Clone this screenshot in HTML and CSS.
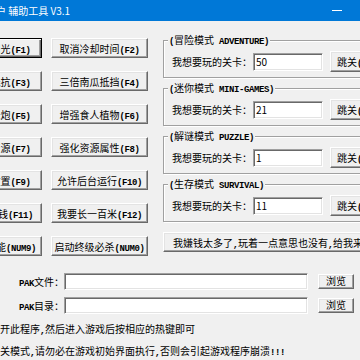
FILE: index.html
```html
<!DOCTYPE html>
<html lang="zh-CN">
<head>
  <meta charset="UTF-8" />
  <meta name="viewport" content="width=device-width, initial-scale=1.0" />
  <title>辅助工具 V3.1</title>
  <link rel="stylesheet" href="styles.css">
</head>
<body>
  <div class="titlebar">
    <span class="title">用户 辅助工具 V3.1</span>
    <span class="min"></span>
  </div>

  <div class="main">
    <div class="hotkeys">
      <button class="btn default">自动收集阳光<span class="en">(F1)</span></button>
      <button class="btn">取消冷却时间<span class="en">(F2)</span></button>
      <button class="btn">植物超强抵抗<span class="en">(F3)</span></button>
      <button class="btn">三倍南瓜抵挡<span class="en">(F4)</span></button>
      <button class="btn">无冷却玉米炮<span class="en">(F5)</span></button>
      <button class="btn">增强食人植物<span class="en">(F6)</span></button>
      <button class="btn">无限阳光资源<span class="en">(F7)</span></button>
      <button class="btn">强化资源属性<span class="en">(F8)</span></button>
      <button class="btn">植物随意放置<span class="en">(F9)</span></button>
      <button class="btn">允许后台运行<span class="en">(F10)</span></button>
      <button class="btn">获得大量金钱<span class="en">(F11)</span></button>
      <button class="btn">我要长一百米<span class="en">(F12)</span></button>
      <button class="btn">开启所有功能<span class="en">(NUM9)</span></button>
      <button class="btn">启动终级必杀<span class="en">(NUM0)</span></button>
    </div>

    <div class="side">
      <div class="group">
        <span class="group-title"><span class="en">(</span>冒险模式<span class="en"> ADVENTURE)</span></span>
        <label class="level-label">我想要玩的关卡：</label>
        <input class="field" type="text" value="50">
        <button class="btn jump">跳关<span class="en">(J1)</span></button>
      </div>
      <div class="group">
        <span class="group-title"><span class="en">(</span>迷你模式<span class="en"> MINI-GAMES)</span></span>
        <label class="level-label">我想要玩的关卡：</label>
        <input class="field" type="text" value="21">
        <button class="btn jump">跳关<span class="en">(J2)</span></button>
      </div>
      <div class="group">
        <span class="group-title"><span class="en">(</span>解谜模式<span class="en"> PUZZLE)</span></span>
        <label class="level-label">我想要玩的关卡：</label>
        <input class="field" type="text" value="1">
        <button class="btn jump">跳关<span class="en">(J3)</span></button>
      </div>
      <div class="group">
        <span class="group-title"><span class="en">(</span>生存模式<span class="en"> SURVIVAL)</span></span>
        <label class="level-label">我想要玩的关卡：</label>
        <input class="field" type="text" value="11">
        <button class="btn jump">跳关<span class="en">(J4)</span></button>
      </div>
      <button class="btn wide">我嫌钱太多了<span class="en">,</span>玩着一点意思也没有<span class="en">,</span>给我来点金币</button>
    </div>
  </div>

  <div class="pak">
    <div class="pak-row">
      <label class="pak-label"><span class="en">PAK</span>文件：</label>
      <input class="field pak-field" type="text">
      <button class="btn browse">浏览</button>
    </div>
    <div class="pak-row">
      <label class="pak-label"><span class="en">PAK</span>目录：</label>
      <input class="field pak-field" type="text">
      <button class="btn browse">浏览</button>
    </div>
  </div>

  <div class="notes">
    <p>开此程序<span class="en">,</span>然后进入游戏后按相应的热键即可</p>
    <p>关模式<span class="en">,</span>请勿必在游戏初始界面执行<span class="en">,</span>否则会引起游戏程序崩溃<span class="en">!!!</span></p>
  </div>
</body>
</html>
```

FILE: styles.css
```css
* {
  box-sizing: border-box;
}
body {
  margin: 0;
  width: 360px;
  height: 360px;
  overflow: hidden;
  background-color: #f0f0f0;
  font-family: "Noto Sans CJK SC", sans-serif;
  font-size: 10px;
  color: #000;
}
.en {
  font-family: "Liberation Mono", monospace;
  font-size: 9px;
  font-weight: bold;
  letter-spacing: -0.4px;
}
.titlebar {
  height: 21px;
  background-color: #0078d7;
  color: #fff;
  display: flex;
  align-items: center;
  justify-content: space-between;
}
.title {
  margin-left: -14px;
  white-space: nowrap;
}
.min {
  width: 10px;
  height: 1px;
  background-color: #fff;
  margin-right: 18px;
}
.main {
  display: flex;
  margin-left: -55px;
  padding-top: 17px;
}
.hotkeys {
  display: grid;
  grid-template-columns: 97px 97px;
  grid-auto-rows: 20px;
  column-gap: 9px;
  row-gap: 13px;
  flex: none;
}
.btn {
  font: inherit;
  color: #000;
  background-color: #f0f0f0;
  border: 1px solid;
  border-color: #fff #696969 #696969 #fff;
  box-shadow: inset -1px -1px #a0a0a0, inset 1px 1px #e3e3e3;
  padding: 0;
  white-space: nowrap;
  overflow: hidden;
  text-align: center;
}
.hotkeys .btn:nth-child(odd) {
  padding-right: 6px;
}
.btn.default {
  border-color: #000;
  box-shadow: inset 1px 1px #fff, inset -1px -1px #696969, inset -2px -2px #a0a0a0;
}
.side {
  flex: none;
  width: 240px;
  margin-left: 15px;
  padding-top: 2px;
}
.group {
  position: relative;
  height: 38px;
  margin-bottom: 10px;
  border: 1px solid #a0a0a0;
  box-shadow: inset 1px 1px #fff, 1px 1px #fff;
  padding: 10px 0 0 8px;
  display: flex;
  align-items: center;
  align-content: flex-start;
  flex-wrap: wrap;
}
.group > * {
  height: 21px;
}
.group-title {
  position: absolute;
  top: -7px;
  left: 4px;
  height: 12px;
  line-height: 12px;
  padding: 0 1px;
  background-color: #f0f0f0;
  white-space: nowrap;
}
.level-label {
  width: 81px;
  line-height: 21px;
  white-space: nowrap;
}
.field {
  font: inherit;
  color: #000;
  background-color: #fff;
  border: 1px solid;
  border-color: #a0a0a0 #fff #fff #a0a0a0;
  box-shadow: inset 1px 1px #696969, inset -1px -1px #e3e3e3;
  padding: 0 2px;
  outline: none;
}
.group .field {
  width: 70px;
  height: 18px;
}
.jump {
  width: 54px;
  margin-left: 7px;
}
.wide {
  display: block;
  width: 240px;
  height: 20px;
  margin-top: 4px;
  text-align: left;
  padding-left: 9px;
}
.pak {
  margin-top: 16px;
}
.pak-row {
  display: flex;
  align-items: center;
  height: 18px;
  margin-bottom: 6px;
}
.pak-label {
  width: 64px;
  text-align: right;
  white-space: nowrap;
}
.pak-field {
  width: 244px;
  height: 17px;
}
.browse {
  width: 36px;
  height: 15px;
  margin-left: 10px;
  line-height: 12px;
}
.notes {
  margin-top: -1px;
}
.notes p {
  margin: 0;
  line-height: 20px;
  white-space: nowrap;
}
```
